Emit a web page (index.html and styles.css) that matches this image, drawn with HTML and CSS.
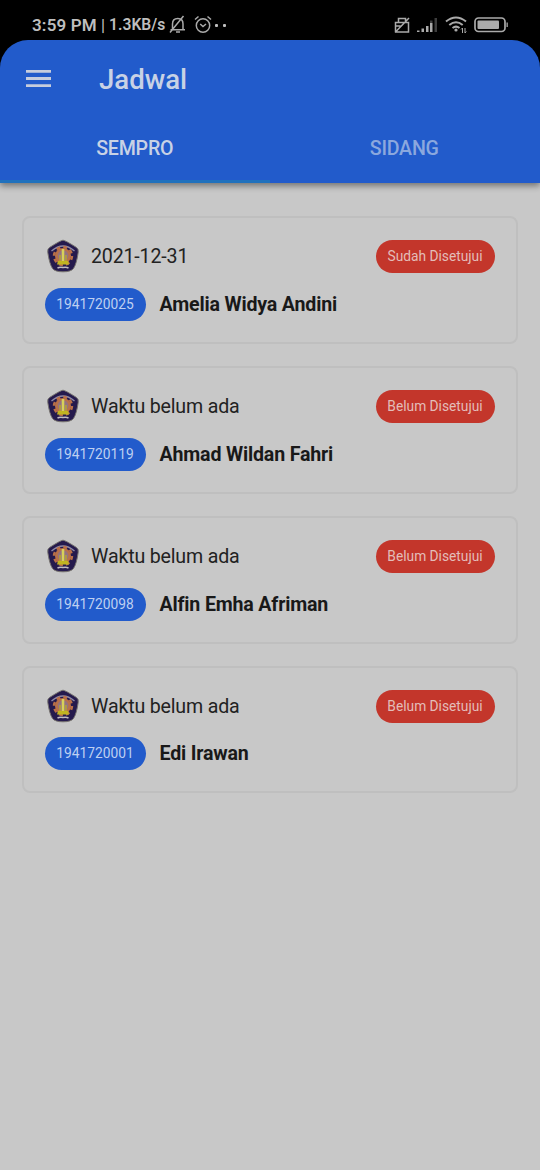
FILE: index.html
```html
<!DOCTYPE html>
<html lang="id">
<head>
<meta charset="utf-8">
<title>Jadwal</title>
<link rel="stylesheet" href="styles.css">
</head>
<body>
<svg width="0" height="0" class="defs" aria-hidden="true">
  <symbol id="emblem" viewBox="0 0 32 34">
    <path d="M16 1.200Q18 1.200 29.500 8.500Q31.800 10 31.200 13.500Q29.500 25 26.500 29.500Q24 32.800 16 32.800Q8 32.800 5.500 29.500Q2.500 25 .8 13.500Q.2 10 2.500 8.500Q14 1.200 16 1.200Z" fill="#251a4d" stroke="#77736f" stroke-width="1"/>
    <path d="M4.500 12Q16 2 27.500 12" fill="none" stroke="#8f8aa6" stroke-width="1.300"/>
    <circle cx="16" cy="17" r="8" fill="#b97048"/>
    <circle cx="16" cy="17" r="8.900" fill="none" stroke="#b97048" stroke-width="2.600" stroke-dasharray="3.900 3.090"/>
    <circle cx="16" cy="16.500" r="5.300" fill="#94727f"/>
    <path d="M14.700 10h2.600v12h-2.600z" fill="#d8d159"/>
    <path d="M12.300 16h1.500v6h-1.500zM18.200 16h1.500v6h-1.500z" fill="#b8a52c"/>
    <path d="M11 22h10l1 3.500H10z" fill="#c0b321"/>
    <path d="M10.500 29q2.500-1.300 5.500-.5 3-.8 5.500.5" fill="none" stroke="#c1bac0" stroke-width="1.500"/>
  </symbol>
</svg>
<div class="screen">
  <div class="status">
    <span class="clock">3:59 PM</span><span class="bar">|</span><span class="speed">1.3KB/s</span>
    <svg class="bell" width="18" height="20" viewBox="0 0 18 20"><path d="M3.500 14.500V9q0-5.500 5.300-5.500T14 9v5.500M1.500 14.700h14.500M7 17h4M1 17.500L14.500 1"/></svg>
    <svg class="alarm" width="18" height="20" viewBox="0 0 18 20"><circle cx="9" cy="10.500" r="6.700"/><path d="M1 4.500L4.500 1.500M17 4.500L13.500 1.500M6.200 9L9 11.500L12 9"/></svg>
    <span class="dots"><i></i><i></i></span>
    <svg class="sim" width="17" height="17" viewBox="0 0 17 17"><path d="M1.500 5.500V15h13V5.500zM4.500 5V1.500h7V5M1.500 9h5M1 15.500L15 1"/></svg>
    <svg class="signal" width="21" height="16" viewBox="0 0 21 16"><path class="on" d="M0 13.500h2.500V15H0zM4.500 11.500H7V15H4.500zM9 9h2.500v6H9zM13 6h2.500v9H13z"/><path class="off" d="M17.500 1H20v14h-2.500zM13 3.500h2.500V6H13z"/></svg>
    <svg class="wifi" width="23" height="18" viewBox="0 0 23 18"><path d="M1 5.500Q11 -2.500 21 5.500M4.300 9Q11 3.500 17.700 9M7.500 12Q11 9.300 14.500 12"/><circle cx="11" cy="14" r="1.600"/><path class="arrows" d="M17.500 12v5M16 13.500l1.500-1.500M20 12v5M21.300 15.500L20 17"/></svg>
    <svg class="battery" width="35" height="16" viewBox="0 0 35 16"><rect class="case" x="1" y="1" width="30" height="13.500" rx="3.500"/><rect class="charge" x="3.500" y="3.500" width="21.500" height="8.500" rx="1"/><path class="charge" d="M32.500 5.500h1.300v4.500h-1.300z"/></svg>
  </div>
  <header>
    <div class="appbar">
      <svg class="menu" width="25" height="17" viewBox="0 0 25 17"><path d="M0 0h25v2.800H0zM0 7.100h25v2.800H0zM0 14.200h25V17H0z"/></svg>
      <h1>Jadwal</h1>
    </div>
    <nav><div class="tab active"><span>SEMPRO</span></div><div class="tab"><span>SIDANG</span></div></nav>
  </header>
  <main>
    <article class="card">
      <div class="top"><svg class="emblem"><use href="#emblem"/></svg><span class="time">2021-12-31</span><span class="pill state">Sudah Disetujui</span></div>
      <div class="person"><span class="pill nim">1941720025</span><b>Amelia Widya Andini</b></div>
    </article>
    <article class="card">
      <div class="top"><svg class="emblem"><use href="#emblem"/></svg><span class="time">Waktu belum ada</span><span class="pill state">Belum Disetujui</span></div>
      <div class="person"><span class="pill nim">1941720119</span><b>Ahmad Wildan Fahri</b></div>
    </article>
    <article class="card">
      <div class="top"><svg class="emblem"><use href="#emblem"/></svg><span class="time">Waktu belum ada</span><span class="pill state">Belum Disetujui</span></div>
      <div class="person"><span class="pill nim">1941720098</span><b>Alfin Emha Afriman</b></div>
    </article>
    <article class="card">
      <div class="top"><svg class="emblem"><use href="#emblem"/></svg><span class="time">Waktu belum ada</span><span class="pill state">Belum Disetujui</span></div>
      <div class="person"><span class="pill nim">1941720001</span><b>Edi Irawan</b></div>
    </article>
  </main>
</div>
</body>
</html>
```
FILE: styles.css
```css
* { box-sizing: border-box; }
body { margin: 0; background: #000; font-family: Roboto, sans-serif; }
.defs { display: block; height: 0; }
.screen { width: 540px; height: 1170px; overflow: hidden; background: linear-gradient(#000 100px, #c8c8c8 100px); white-space: nowrap; }
svg { display: block; flex: none; }

.status { height: 40px; display: flex; align-items: center; padding: 10px 31px 0 32px; color: #bebebe; font-weight: 600; }
.status svg { fill: none; stroke: #aaa; stroke-width: 1.5; }
.clock { width: 69px; font-size: 17px; letter-spacing: .15px; }
.bar { width: 8px; font-size: 16px; font-weight: 500; }
.speed { width: 60px; font-size: 15.6px; letter-spacing: .05px; }
.status .alarm { margin-left: 7px; }
.dots { display: flex; gap: 5px; margin: 0 auto 0 3px; }
.dots i { width: 3px; height: 3px; border-radius: 1px; background: #bebebe; }
.status .sim { margin-right: 0; }
.status .signal { margin-left: 6px; stroke: none; }
.signal .on { fill: #aaa; }
.signal .off { fill: #3d3d3d; }
.status .wifi { margin-left: 7px; stroke-width: 2; }
.wifi circle { fill: #aaa; stroke: none; }
.wifi .arrows { stroke-width: 1; }
.status .battery { margin-left: 6px; stroke: #aaa; }
.battery .case { stroke-width: 1.7; }
.battery .charge { fill: #aaa; stroke: none; }

header { height: 143px; background: #225bcb; border-radius: 28px 28px 0 0; box-shadow: 0 3px 6px rgba(0, 0, 0, .42); position: relative; }
.appbar { height: 77px; display: flex; align-items: center; padding-left: 26px; gap: 48px; }
.menu { fill: #c6cddd; }
h1 { margin: 2px 0 0; color: #c8d2e5; font-size: 27.6px; line-height: 32px; font-weight: 500; }
nav { height: 66px; display: flex; }
.tab { flex: 1; display: flex; justify-content: center; padding-top: 20px; color: #8ba8de; font-size: 19.6px; letter-spacing: -.22px; line-height: 23px; font-weight: 500; }
.tab + .tab { padding-right: 1px; }
.tab.active { color: #c8d2e5; border-bottom: 3px solid #2071bd; }

main { display: flex; flex-direction: column; gap: 22px; padding: 33px 22px; }
.card { height: 128px; border: 2px solid #bfbfbf; border-radius: 8px; padding: 22px 21px; display: flex; flex-direction: column; gap: 15px; }
.card:last-child { height: 127px; gap: 14px; }
.top, .person { display: flex; align-items: center; height: 33px; }
.emblem { width: 32px; height: 34px; margin: -2px 14.500px 0 1.500px; }
.time { color: #222; font-size: 19.6px; letter-spacing: -.17px; line-height: 23px; margin-left: -2px; }
.pill { display: flex; align-items: center; justify-content: center; height: 33px; border-radius: 17px; padding: 0 1px 1px 0; font-size: 13.75px; line-height: 16px; flex: none; }
.state { width: 119px; margin-left: auto; background: #c3362b; color: #e3bdb9; }
.nim { width: 101px; background: #225bcb; color: #bed0f1; }
.person b { margin-left: 13.500px; color: #191919; font-size: 19.6px; letter-spacing: -.17px; line-height: 23px; font-weight: 700; }
```
